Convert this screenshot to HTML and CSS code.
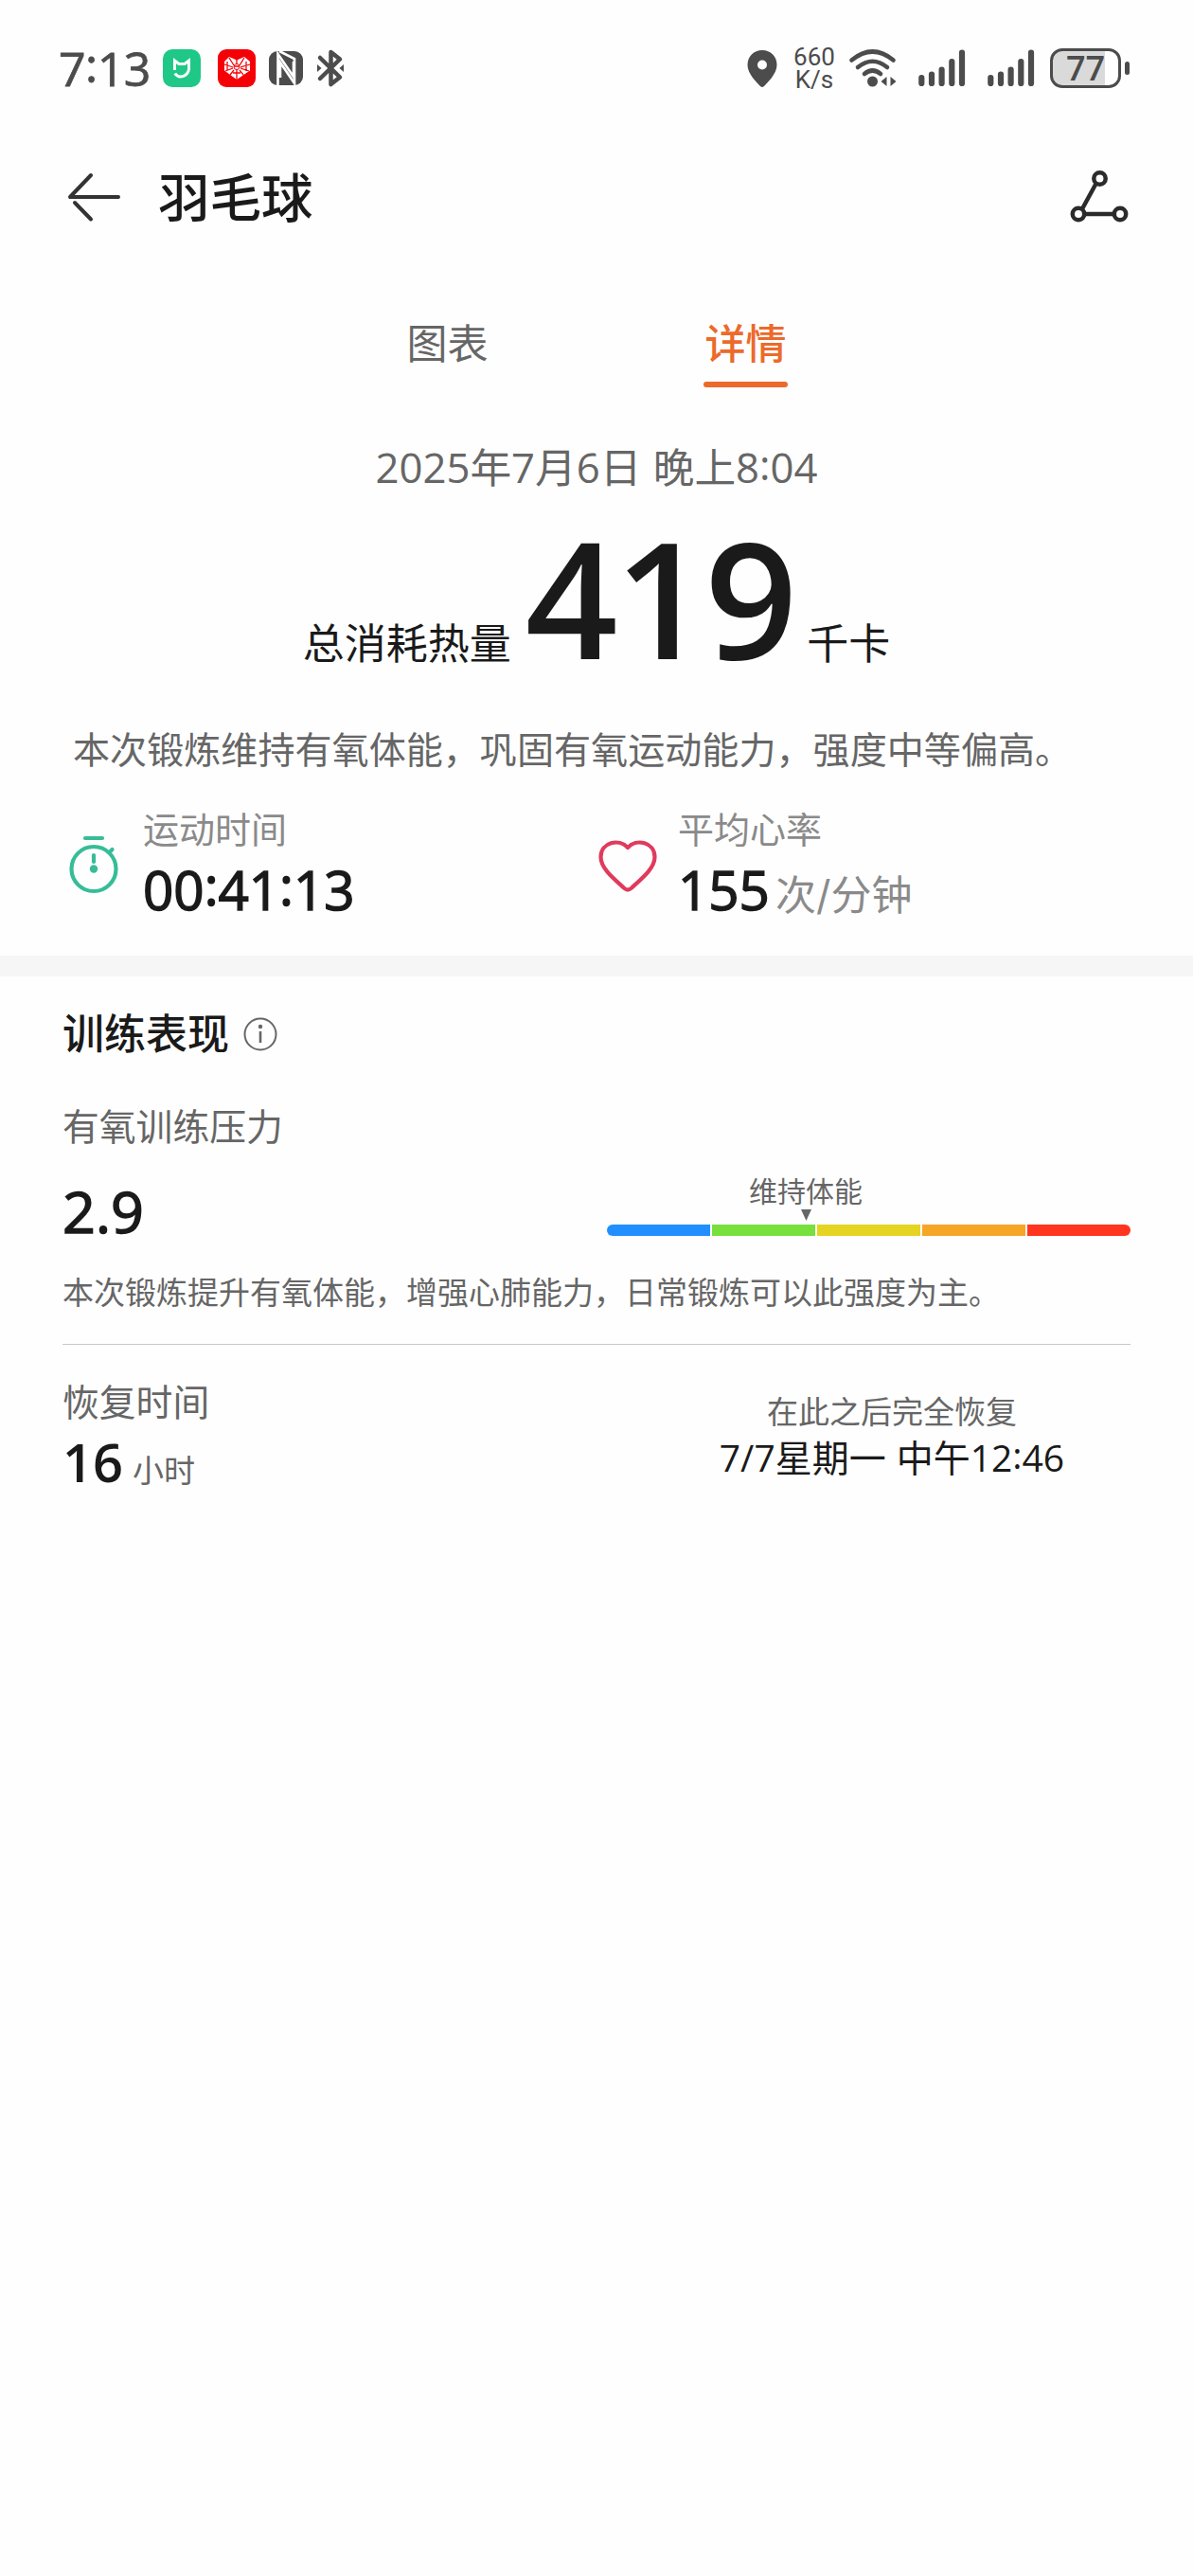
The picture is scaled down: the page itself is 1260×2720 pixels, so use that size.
FILE: index.html
```html
<!DOCTYPE html>
<html lang="zh-CN">
<head>
    <meta charset="UTF-8">
    <meta name="viewport" content="width=device-width, initial-scale=1.0">
    <title>羽毛球</title>
    <link rel="stylesheet" href="styles.css">
</head>
<body>
<div class="status-bar">
    <div class="status-left">
        <span class="clock num">7<span class="colon">:</span>13</span>
        <svg class="app-icon" width="40" height="40" viewBox="0 0 40 40">
            <rect width="40" height="40" rx="10" fill="#1fc887"/>
            <path d="M12.500 22V12l4.500 3.500h6L27.500 12v10M12.800 25.500c3 5 11.500 5 14.700-3.500" fill="none" stroke="#fff" stroke-width="3"/>
        </svg>
        <svg class="app-icon" width="40" height="40" viewBox="0 0 40 40">
            <rect width="40" height="40" rx="9" fill="#f60008"/>
            <path d="M20 32L7 22.500V13l5-5 8 3.500L28 8l6 5v9.500z" fill="#fff"/>
            <path d="M20 11v5M20 21v11M7 16l9 3M34 16l-10 3M12 9l5 8M28 9l-5 8M8 23l8-3M33 23l-9-3M13 27l4-5M27 27l-4-5M10 13v10M30 13v10M16 25h8M17 18h6" stroke="#f60008" stroke-width="1.300" fill="none"/>
            <circle cx="20" cy="18.500" r="3" fill="none" stroke="#f60008"/>
        </svg>
        <svg class="nfc" width="36" height="36" viewBox="0 0 36 36">
            <rect width="36" height="36" rx="9" fill="#4c4c4c"/>
            <path d="M9.500 37V3L26 27V11M11 0l16 8v26L12 12v16" fill="none" stroke="#fff" stroke-width="2.600"/>
        </svg>
        <svg class="bluetooth" width="28" height="40" viewBox="0 0 28 40">
            <path d="M3 9l21 20.500L14.500 37V3L24 10.500 3 31" fill="none" stroke="#4c4c4c" stroke-width="4.500" stroke-linecap="round" stroke-linejoin="round"/>
            <path d="M0 16l4.500 4L0 24zM28 16l-4.500 4 4.500 4z" fill="#4c4c4c"/>
        </svg>
    </div>
    <div class="status-right">
        <svg width="32" height="39" viewBox="0 0 32 39">
            <path d="M16 0C7 0 .500 6.500.500 15.500.500 25 10 33.500 14 38q2 1.800 4 0c4-4.500 13.500-13 13.500-22.500C31.500 6.500 25 0 16 0zm0 10.500a5 5 0 0 1 0 10 5 5 0 0 1 0-10z" fill="#4c4c4c" fill-rule="evenodd"/>
        </svg>
        <div class="net-speed"><span>660</span><span>K/s</span></div>
        <svg class="wifi" width="50" height="40" viewBox="0 0 50 40">
            <g fill="none" stroke="#4c4c4c" stroke-width="4.600" stroke-linecap="round">
                <path d="M2.500 11.500Q24.500-6.500 46.500 11.500"/>
                <path d="M9 19q15.500-12.500 31 0"/>
                <path d="M16 26q8.500-7 17 0"/>
            </g>
            <circle cx="24.500" cy="34" r="5.500" fill="#4c4c4c"/>
            <path d="M33.500 34l6-5v10zM49.500 34l-6-5v10z" fill="#4c4c4c"/>
        </svg>
        <svg class="signal" width="50" height="40" viewBox="0 0 50 40">
            <path d="M3.300 30v6M14 26.500V36M24.600 21.500V36M35.300 13V36M46 3.500V36" stroke="#4c4c4c" stroke-width="6.200" stroke-linecap="round"/>
        </svg>
        <svg class="signal" width="50" height="40" viewBox="0 0 50 40">
            <path d="M3.300 30v6M14 26.500V36M24.600 21.500V36M35.300 13V36M46 3.500V36" stroke="#4c4c4c" stroke-width="6.200" stroke-linecap="round"/>
        </svg>
        <div class="battery num">77</div>
        <div class="battery-tip"></div>
    </div>
</div>

<div class="header">
    <svg width="56" height="52" viewBox="0 0 56 52">
        <path d="M25 3L3 26h51M8 32l17 17.500" fill="none" stroke="#333" stroke-width="4" stroke-linecap="round" stroke-linejoin="round"/>
    </svg>
    <h1 class="title">羽毛球</h1>
    <svg class="route" width="62" height="56" viewBox="0 0 62 56">
        <g fill="none" stroke="#2b2b2b" stroke-width="4.500">
            <path d="M12.500 41.500L27.500 14M16.500 46h30"/>
            <circle cx="31.500" cy="8.500" r="6.200"/>
            <circle cx="9" cy="46" r="6.200"/>
            <circle cx="53" cy="46" r="6.200"/>
        </g>
    </svg>
</div>

<div class="tabs">
    <div class="tab">图表</div>
    <div class="tab active">详情</div>
</div>

<div class="summary">
    <div class="date"><span class="num">2025</span>年<span class="num">7</span>月<span class="num">6</span>日 晚上<span class="num">8<span class="colon">:</span>04</span></div>
    <div class="calories">
        <span>总消耗热量</span>
        <span class="calories-value num">419</span>
        <span>千卡</span>
    </div>
    <p class="summary-text">本次锻炼维持有氧体能，巩固有氧运动能力，强度中等偏高。</p>
    <div class="metrics">
        <div class="metric">
            <svg width="62" height="66" viewBox="0 0 62 66">
                <g fill="none" stroke="#36bd98" stroke-width="4.200" stroke-linecap="round">
                    <circle cx="31" cy="37.500" r="23.500"/>
                    <path d="M22 5h18M48 19.500l2.500-2.500M31 23v7"/>
                </g>
                <circle cx="31" cy="37.500" r="4.200" fill="#36bd98"/>
            </svg>
            <div>
                <div class="metric-label">运动时间</div>
                <div class="metric-value"><span class="num medium">00<span class="colon">:</span>41<span class="colon">:</span>13</span></div>
            </div>
        </div>
        <div class="metric">
            <svg width="62" height="66" viewBox="0 0 62 66">
                <path d="M30 15C21 5 1.500 9 1.500 25c0 12 14 23 25 33q3.500 3 7 0c11-10 25-21 25-33C58.500 9 39 5 30 15z" fill="none" stroke="#e03a5c" stroke-width="4.200" stroke-linejoin="round"/>
            </svg>
            <div>
                <div class="metric-label">平均心率</div>
                <div class="metric-value"><span class="num medium">155</span><span class="metric-unit">次/分钟</span></div>
            </div>
        </div>
    </div>
</div>

<div class="performance">
    <div class="section-title">
        <h2>训练表现</h2>
        <svg width="36" height="36" viewBox="0 0 36 36">
            <circle cx="18" cy="18" r="16.500" fill="none" stroke="#666" stroke-width="2"/>
            <circle cx="18" cy="10" r="2.200" fill="#666"/>
            <path d="M18 15v12" stroke="#666" stroke-width="2.600"/>
        </svg>
    </div>
    <div class="item-label">有氧训练压力</div>
    <div class="stress">
        <div class="stress-value num medium">2.9</div>
        <div class="scale">
            <div class="scale-pointer">
                <span>维持体能</span>
                <svg width="11" height="12" viewBox="0 0 11 12"><path d="M0 0h11L5.500 12z" fill="#666"/></svg>
            </div>
            <div class="scale-bar">
                <div class="zone blue"></div>
                <div class="zone green"></div>
                <div class="zone yellow"></div>
                <div class="zone orange"></div>
                <div class="zone red"></div>
            </div>
        </div>
    </div>
    <p class="stress-text">本次锻炼提升有氧体能，增强心肺能力，日常锻炼可以此强度为主。</p>
    <div class="recovery">
        <div>
            <div class="item-label">恢复时间</div>
            <div class="recovery-value"><span class="num">16</span><span class="recovery-unit">小时</span></div>
        </div>
        <div class="recovery-end">
            <div class="recovery-hint">在此之后完全恢复</div>
            <div class="recovery-date"><span class="num">7/7</span>星期一 中午<span class="num">12<span class="colon">:</span>46</span></div>
        </div>
    </div>
</div>
</body>
</html>
```
FILE: styles.css
```css
* {
    box-sizing: border-box;
    margin: 0;
    padding: 0;
}

body {
    width: 1260px;
    min-height: 2720px;
    background-color: #fefefe;
    color: #1a1a1a;
    font-family: Inter, "Noto Sans CJK SC", sans-serif;
}

svg {
    display: block;
    flex: none;
    overflow: visible;
}

.num {
    font-family: "Open Sans", "Noto Sans", sans-serif;
}

/* between regular and semibold */
.medium {
    -webkit-text-stroke: 1.5px #1a1a1a;
}

/* lift the colon to the middle of the digits */
.colon {
    position: relative;
    top: -0.08em;
}

/* status bar */
.status-bar {
    display: flex;
    justify-content: space-between;
    height: 144px;
    padding: 0 67px 0 62px;
    color: #4c4c4c;
}

.status-left,
.status-right {
    display: flex;
    align-items: center;
}

.clock {
    width: 110px;
    font-size: 50px;
    line-height: 60px;
    letter-spacing: -0.5px;
    -webkit-text-stroke: 0.8px #4c4c4c;
}

.app-icon {
    margin-right: 18px;
}

.nfc {
    margin: 0 15px 0 -4px;
}

.net-speed {
    display: flex;
    flex-direction: column;
    width: 60px;
    margin-left: 9px;
    margin-right: 7px;
    font-family: Roboto, sans-serif;
    font-size: 26px;
    line-height: 24px;
    text-align: center;
}

.wifi {
    margin-right: 23px;
}

.signal {
    margin-right: 23px;
}

.signal + .battery {
    margin-left: -7px;
}

.battery {
    width: 75px;
    height: 42px;
    border: 3px solid #4c4c4c;
    border-radius: 13px;
    background: linear-gradient(to right, #dadada 80%, #fefefe 80%);
    font-size: 36px;
    font-weight: 600;
    line-height: 35px;
    text-align: center;
}

.battery-tip {
    width: 5px;
    height: 14px;
    margin-left: 4px;
    border-radius: 3px;
    background-color: #4c4c4c;
}

/* header */
.header {
    display: flex;
    align-items: center;
    height: 128px;
    padding: 0 68px 0 71px;
}

.title {
    margin-left: 40px;
    padding-top: 1px;
    font-size: 54.5px;
    font-weight: 500;
    line-height: 70px;
}

.route {
    margin-left: auto;
}

.tabs {
    display: flex;
    justify-content: center;
    gap: 226px;
    padding-top: 61px;
}

.tab {
    width: 89px;
    height: 76px;
    color: #666;
    font-size: 43px;
    line-height: 60px;
    text-align: center;
}

.tab.active {
    position: relative;
    color: #ec6a2c;
    font-weight: 500;
}

.tab.active::after {
    content: "";
    position: absolute;
    left: 0;
    bottom: 0;
    width: 100%;
    height: 6px;
    border-radius: 3px;
    background-color: #ec6a2c;
}

/* summary */
.summary {
    height: 600px;
    padding-top: 54px;
}

.date {
    height: 60px;
    color: #666;
    font-size: 43.7px;
    line-height: 60px;
    text-align: center;
}

.calories {
    display: flex;
    justify-content: center;
    align-items: baseline;
    height: 202px;
    padding-top: 37px;
    font-size: 44px;
    line-height: 60px;
}

.calories-value {
    margin: 0 13px 0 15px;
    font-size: 171px;
    font-weight: 600;
    line-height: 140px;
    letter-spacing: -3px;
}

.summary-text {
    margin-top: 42px;
    padding-left: 77px;
    color: #666;
    font-size: 39.1px;
    line-height: 50px;
}

.metrics {
    display: flex;
    margin-top: 39px;
    padding-left: 68px;
}

.metric {
    display: flex;
    align-items: center;
    gap: 21px;
    width: 565px;
}

.metric-label {
    color: #8a8a8a;
    font-size: 38px;
    line-height: 40px;
}

.metric-value {
    height: 60px;
    margin-top: 14px;
    font-size: 56.5px;
    line-height: 60px;
}

.metric-unit {
    margin-left: 6px;
    color: #8a8a8a;
    font-size: 43px;
}

/* performance */
.performance {
    padding: 36px 66px 0;
    border-top: 22px solid #f6f6f6;
}

.section-title {
    display: flex;
    align-items: center;
    gap: 15px;
}

.section-title h2 {
    padding-top: 1px;
    font-size: 44px;
    font-weight: 500;
    line-height: 49px;
}

.item-label {
    color: #666;
    font-size: 38.8px;
    line-height: 50px;
}

.section-title + .item-label {
    margin-top: 48px;
}

.stress {
    display: flex;
    justify-content: space-between;
    height: 90px;
    margin-top: 25px;
}

.stress-value {
    padding-top: 9px;
    font-size: 61px;
    line-height: 60px;
}

.scale {
    width: 553px;
}

.scale-pointer {
    display: flex;
    flex-direction: column;
    align-items: center;
    width: 420px;
    height: 53px;
    color: #666;
    font-size: 30px;
    line-height: 37px;
}

.scale-bar {
    display: flex;
    gap: 2px;
    height: 12px;
    overflow: hidden;
    border-radius: 6px;
}

.zone {
    flex: 1;
}

.blue {
    background-color: #218fff;
}

.green {
    background-color: #77e03c;
}

.yellow {
    background-color: #e6d422;
}

.orange {
    background-color: #f6a626;
}

.red {
    background-color: #ff3520;
}

.stress-text {
    padding: 10px 0 29px;
    border-bottom: 1px solid #c8c8c8;
    color: #666;
    font-size: 33px;
    line-height: 50px;
}

.recovery {
    display: flex;
    justify-content: space-between;
    padding-top: 36px;
}

.recovery-value {
    height: 60px;
    margin-top: 7px;
    font-size: 56px;
    font-weight: 600;
    line-height: 60px;
}

.recovery-unit {
    margin-left: 10px;
    color: #666;
    font-size: 33px;
    font-weight: 400;
}

.recovery-end {
    width: 504px;
    padding-top: 12px;
    text-align: center;
}

.recovery-hint {
    color: #666;
    font-size: 33px;
    line-height: 46px;
}

.recovery-date {
    font-size: 39px;
    line-height: 50px;
}
```
